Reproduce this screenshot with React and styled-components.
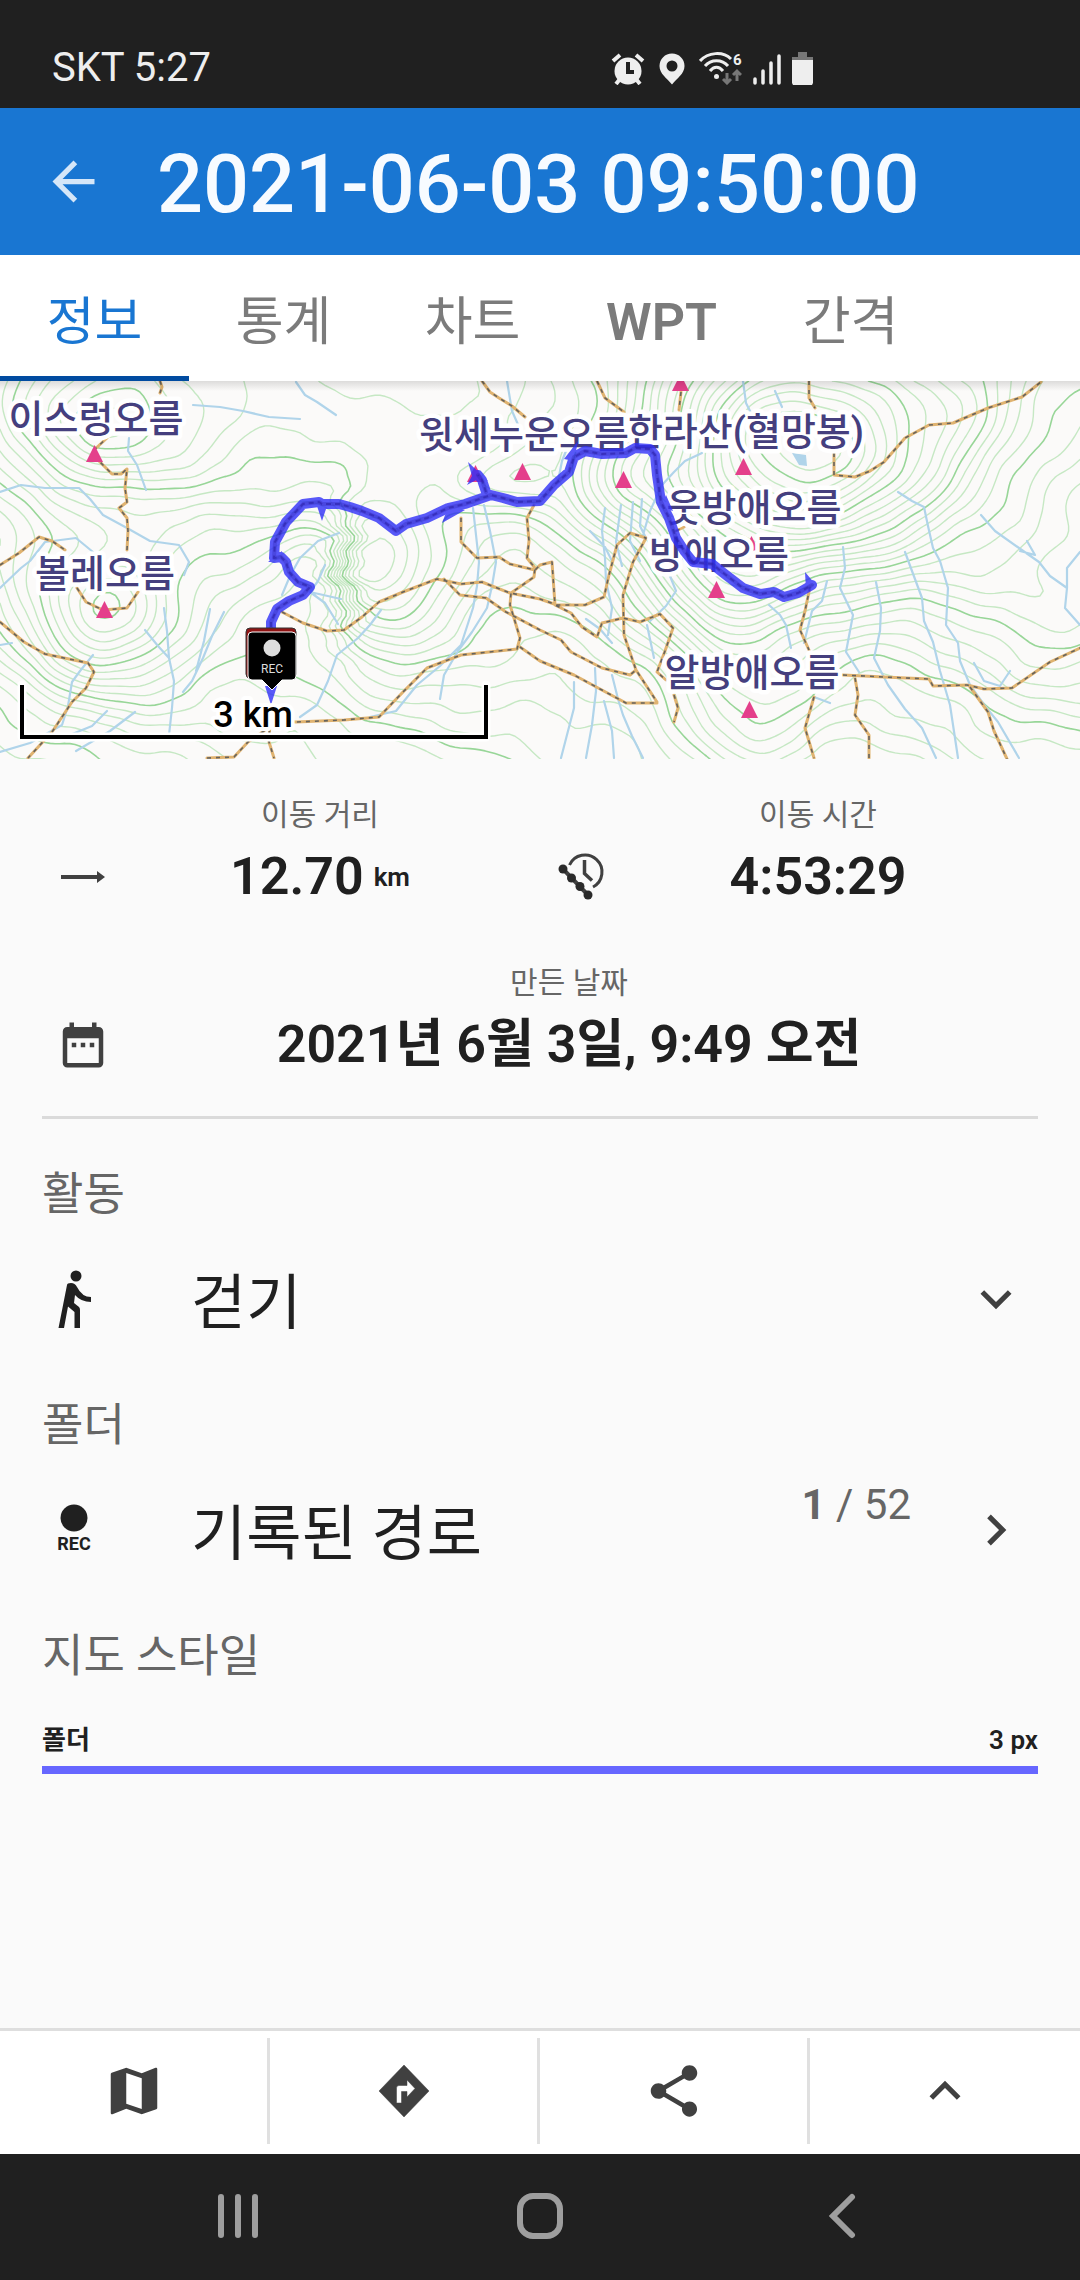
import React from 'react'
import styled, { createGlobalStyle } from 'styled-components';
import {
  MdArrowBack,
  MdDateRange,
  MdKeyboardArrowDown,
  MdKeyboardArrowRight,
  MdKeyboardArrowUp,
  MdMap,
  MdShare,
} from 'react-icons/md';


const GlobalStyle = createGlobalStyle`
  * {
    box-sizing: border-box;
  }
  body {
    margin: 0;
    background: #fafafa;
    color: #202020;
    font-family: Roboto, "Noto Sans CJK KR", sans-serif;
  }
  button, select {
    margin: 0;
    padding: 0;
    border: 0;
    background: none;
    color: inherit;
    font: inherit;
  }
  svg {
    display: block;
    flex-shrink: 0;
  }
`;

const Page = styled.div`
  display: flex;
  flex-direction: column;
  min-height: 100vh;
`;

/* ---------- top ---------- */

const StatusBar = styled.div`
  display: flex;
  align-items: center;
  justify-content: space-between;
  height: 108px;
  padding: 28px 267px 0 52px;
  background: #202020;
  color: #eee;
  font-size: 40px;
  line-height: 44px;
`;

const StatusIcons = styled.div`
  display: flex;
  align-items: flex-end;
  gap: 11px;
`;

const Header = styled.header`
  display: flex;
  align-items: center;
  gap: 52px;
  height: 147px;
  padding: 0 42px;
  background: #1976d2;
  color: #f7fbff;
`;

const BackButton = styled.button`
  color: #d5e6f8;
`;

const Title = styled.h1`
  margin: 0;
  padding-top: 7px;
  font-size: 81px;
  font-weight: 500;
  line-height: 96px;
  white-space: nowrap;
`;

const Tabs = styled.nav`
  display: flex;
  height: 126px;
  background: #fff;
`;

const Tab = styled.button`
  min-width: 189px;
  padding-top: 15px;
  border-bottom: 5px solid ${({ $active }) => ($active ? '#004ba0' : 'transparent')};
  color: ${({ $active }) => ($active ? '#1976d2' : '#7b7b7b')};
  font-size: 52px;
  font-weight: ${({ $latin }) => ($latin ? 600 : 400)};
  line-height: 72px;
`;

/* ---------- map ---------- */

const MapBox = styled.div`
  position: relative;
  height: 378px;
  background: #fbfaf9;

  > svg {
    width: 100%;
    height: 100%;
  }

  &::before {
    content: "";
    position: absolute;
    top: 0;
    left: 0;
    right: 0;
    height: 10px;
    background: linear-gradient(rgba(0, 0, 0, 0.12), transparent);
  }
`;

const Line = styled.path`
  fill: none;
  stroke-linejoin: round;
  stroke-linecap: ${({ $dash }) => ($dash ? 'butt' : 'round')};
  stroke: ${({ $color }) => $color};
  stroke-width: ${({ $width }) => $width};
  stroke-dasharray: ${({ $dash }) => $dash || 'none'};
`;

const PeakName = styled.text`
  fill: #453f7e;
  stroke: #fff;
  stroke-width: 9px;
  stroke-linejoin: round;
  paint-order: stroke;
  font-size: 38px;
  font-weight: 500;
  text-anchor: middle;
`;

const ScaleText = styled.text`
  fill: #000;
  stroke: #fff;
  stroke-width: 8px;
  stroke-linejoin: round;
  paint-order: stroke;
  font-size: 36px;
  font-weight: 500;
  text-anchor: middle;
`;

const MarkerText = styled.text`
  fill: #ddd;
  font-size: 12px;
  text-anchor: middle;
`;

const MAP_W = 1080;
const MAP_H = 378;

// x, y, height, spread x, spread y
const hills = [
  [104, 235, 10, 60, 55],
  [90, 50, 9, 75, 55],
  [475, 102, 2, 22, 20],
  [522, 97, 3, 25, 22],
  [623, 104, 4, 45, 30],
  [790, 80, 24, 110, 95],
  [716, 215, 5, 45, 40],
  [749, 335, 6, 50, 60],
  [398, 190, 5, 60, 90],
  [250, 40, 4, 120, 100],
  [960, 20, 5, 60, 60],
  [1040, 250, 5, 90, 110],
];

const heightAt = (x, y) => {
  let h = 20 + x * 0.012 - y * 0.03;
  hills.forEach(([cx, cy, top, sx, sy]) => {
    h += top * Math.exp(-(((x - cx) / sx) ** 2 + ((y - cy) / sy) ** 2) / 2);
  });
  // the cliff east of the first bend
  const edge = 345 + Math.sin(y / 4) * 4 + Math.sin(y / 11) * 6;
  h += 7 * Math.tanh((x - edge) / 22) * Math.exp(-(((x - 345) / 70) ** 2 + ((y - 190) / 60) ** 2));
  h += Math.sin(x / 17 + y / 29) * 0.22 + Math.sin(y / 13 - x / 37) * 0.2;
  h += Math.sin(x / 53 - y / 41) * 0.5 + Math.sin(x / 7 + Math.sin(y / 9)) * 0.06;
  return h;
};

// marching squares over the height field, one path string per level
const contour = (level, step = 5) => {
  const mix = (a, b) => (level - a) / (b - a);
  let d = '';
  for (let y = 0; y < MAP_H; y += step) {
    for (let x = 0; x < MAP_W; x += step) {
      const a = heightAt(x, y);
      const b = heightAt(x + step, y);
      const c = heightAt(x + step, y + step);
      const e = heightAt(x, y + step);
      const cuts = [];
      if (a > level !== b > level) cuts.push([x + step * mix(a, b), y]);
      if (b > level !== c > level) cuts.push([x + step, y + step * mix(b, c)]);
      if (e > level !== c > level) cuts.push([x + step * mix(e, c), y + step]);
      if (a > level !== e > level) cuts.push([x, y + step * mix(a, e)]);
      for (let i = 0; i + 1 < cuts.length; i += 2) {
        const [p, q] = [cuts[i], cuts[i + 1]];
        d += `M${p[0].toFixed(1)} ${p[1].toFixed(1)}L${q[0].toFixed(1)} ${q[1].toFixed(1)}`;
      }
    }
  }
  return d;
};

const levels = Array.from({ length: 52 }, (unused, i) => 4 + i);
const minorContours = levels.filter((l) => l % 5 !== 0).map((l) => contour(l)).join('');
const majorContours = levels.filter((l) => l % 5 === 0).map((l) => contour(l)).join('');

const streams = `
  M0 111L21 104L45 107L79 107L90 118L103 134L127 147L150 160L179 164L189 181L184 194
  M0 207L21 187L30 180L45 161L76 157L93 171
  M193 24L220 26L243 30L269 36L300 38 M296 1L305 14L317 21L336 34
  M129 57L128 70L137 84L146 109
  M164 227L167 250L169 277L174 300L172 327L169 354 M145 249L158 265L169 277
  M224 231L212 255L203 277L192 300L183 311 M210 228L204 260L196 290
  M93 274L80 290L72 301L68 325L62 344L30 362L0 371 M0 264L12 262
  M107 330L92 345L60 358 M135 331L110 350L76 370
  M484 124L490 150L496 181L492 205L487 227L472 251L458 270L444 294L440 318
  M473 127L479 181L477 205L473 227L461 264L440 285L417 304L396 330L370 336
  M381 229L370 244L358 257L337 274L328 300L317 324L300 336
  M339 152L318 160L300 177L290 195L282 214 M325 184L318 200L310 211L341 218
  M310 211L325 222L338 243
  M898 111L912 120L924 126L928 145L933 167L940 180L948 207L946 244L958 262L960 280L970 304L985 325L998 341L1019 377
  M905 171L912 190L922 217L924 240L933 261L940 290L950 324L958 377
  M981 134L995 150L1019 167L1039 181L1050 195L1067 207L1065 227L1080 244
  M1080 171L1067 187L1067 207 M1027 160L1035 174L1020 170
  M843 166L845 187L840 207L853 234L846 271L859 291
  M876 201L881 227L880 250L874 277L888 304L905 328L922 347L936 377
  M974 282L984 300L1000 305L1010 290
  M605 127L602 150L605 177L606 200L612 227L608 254 M621 124L616 161L622 185
  M633 121L630 160L640 180 M642 118L640 145L646 157
  M702 72L685 80L674 91L662 104L650 130L643 154
  M574 301L574 327L568 350L561 377 M595 287L596 310L592 344L586 377
  M612 294L618 318L623 334L632 355L643 377 M604 320L612 350L614 377
  M769 224L780 234L786 244L791 267 M647 244L654 277 M590 150L605 166L612 180
  M827 200L822 220L812 230L804 262 M743 0L746 22L752 34 M775 10L782 26
  M668 190L676 210L666 225L650 240 M507 0L512 30L520 48 M814 316L830 322
  M570 60L562 80L558 100 M586 238L600 248L612 262
`;

const trails = `
  M0 184L19 172L39 156L52 160L65 169
  M77 207L86 221L103 229L127 227L138 211
  M127 169L128 150L127 137L119 127L127 121L125 107L127 88L121 93L112 93L98 79L94 69L107 57
  M0 241L24 261L45 273L69 278L88 282L94 291L86 307L72 321L52 351L28 377
  M282 231L303 242L327 250L344 249L362 236L379 221L403 211L437 198L461 203L482 201L510 212L540 218L557 224L585 224L604 216L609 194L617 164L630 152L646 157L633 181L623 214L624 254L636 289L657 321
  M444 198L460 214L486 217L506 231L540 249L561 259L571 271L602 287L630 294L636 289
  M270 339L296 341L344 339L379 336L403 311L427 287L461 274L517 268L520 257L510 224L511 212L534 196L535 187L527 177L529 160L527 137L534 124
  M461 137L461 161L477 177L499 176L510 183L535 189L540 184L552 181L555 224L571 232L582 246L597 256L602 242L623 237L640 241L660 233L673 247L665 270L657 291L666 299
  M674 314L678 327L674 341
  M520 266L540 280L574 294L600 308L626 322L657 322
  M482 0L490 11L499 17L512 25L525 36 M160 0L162 6L160 12
  M597 0L605 17L624 31 M681 11L679 29 M809 0L809 17L815 27
  M834 72L834 94L855 96L870 90L884 81L905 57L929 44L953 42L988 27L1022 16L1041 1
  M810 206L805 230L800 249L809 269
  M843 294L884 296L929 298L933 305L967 304L984 308L1012 307L1050 281L1080 267
  M970 306L988 331L994 350L1007 378 M855 297L858 314L855 334L869 354L869 377
  M814 316L805 347L814 377 M207 377L234 376L248 361L264 350L270 339L269 361L274 377
  M676 150L684 146
`;

const route = `
  M271 300L271 241L277 228L289 220L303 214L310 206L298 201L289 191L286 181L281 176L274 177L275 161L286 141
  L303 123L319 121L322 123L339 123L350 126L362 130L379 137L396 150L406 143L427 137L448 127L465 123L491 114L503 117L517 121L540 120
  L554 104L569 91L574 76L585 70L602 73L626 72L635 67L650 68L655 74L657 94L661 121L669 137L676 157L685 171L693 181
  L712 183L726 194L743 207L760 213L774 211L784 216L798 212L812 204
  M486 111L482 99L478 94
`;

const arrowHeads = 'M468 81L488 100L478 98L467 104L472 95Z M316 122L328 122L322 140Z M442 142L449 124L465 129Z M805 191L816 204L806 209Z M578 60L574 80L564 78Z M666 114L673 130L660 126Z M268 181L282 170L282 181Z M265 305L277 305L271 324Z';

const summits = [
  [94, 81], [475, 101], [522, 99], [104, 237], [680, 10],
  [623, 107], [743, 94], [716, 217], [749, 337], [751, 172],
];

const peaks = [
  { name: '이스렁오름', x: 96, y: 51 },
  { name: '윗세누운오름', x: 524, y: 67 },
  { name: '한라산(혈망봉)', x: 746, y: 64 },
  { name: '웃방애오름', x: 754, y: 140 },
  { name: '방애오름', x: 719, y: 187 },
  { name: '알방애오름', x: 752, y: 305 },
  { name: '볼레오름', x: 105, y: 206 },
];

const TrackMap = () => (
  <MapBox>
    <svg viewBox={`0 0 ${MAP_W} ${MAP_H}`} preserveAspectRatio="xMidYMid slice">
      <Line d={minorContours} $color="#c6e8c4" $width={1.4} />
      <Line d={majorContours} $color="#98d698" $width={1.6} />
      <Line d={streams} $color="#b0d4ea" $width={2.2} />
      <path d="M792 72L806 74L807 85L799 84Z" fill="#b0d4ea" />
      <Line d={trails} $color="#e0b370" $width={3} />
      <Line d={trails} $color="#66635e" $width={1.6} $dash="4 5" />
      {summits.map(([x, y]) => (
        <path key={`${x}-${y}`} d={`M${x - 8} ${y}h17l-8.500-17z`} fill="#e43f8b" />
      ))}
      {peaks.map(({ name, x, y }) => (
        <PeakName key={name} x={x} y={y}>{name}</PeakName>
      ))}
      <g opacity="0.8">
        <Line d={route} $color="#3030f8" $width={10} />
        <path d={arrowHeads} fill="#3030f8" />
      </g>
      <Line d={route} $color="#2b22a8" $width={4} opacity="0.3" />
      <Line d={route} $color="#2b22a8" $width={2} $dash="5 4" opacity="0.6" />

      <rect x="246" y="247" width="50" height="50" rx="4" fill="#8f1414" stroke="#333" />
      <path
        d="M252 251h40a4 4 0 0 1 4 4v40a4 4 0 0 1-4 4h-10l-10 10-10-10h-10a4 4 0 0 1-4-4v-40a4 4 0 0 1 4-4z"
        fill="#000"
        stroke="#fff"
      />
      <circle cx="272" cy="267" r="8.500" fill="#ddd" />
      <MarkerText x="272" y="292">REC</MarkerText>

      <Line d="M22 304V356H486V304" $color="#fff" $width={9} />
      <path d="M22 304V356H486V304" fill="none" stroke="#000" strokeWidth="4" />
      <ScaleText x="253" y="346">3 km</ScaleText>
    </svg>
  </MapBox>
)

/* ---------- summary ---------- */

const Stats = styled.section`
  display: grid;
  grid-template-columns: 1fr 1fr;
  margin: 0 42px;
  padding-bottom: 21px;
  border-bottom: 3px solid #dadada;
`;

const Stat = styled.div`
  display: grid;
  grid-column: ${({ $wide }) => ($wide ? '1 / -1' : 'auto')};
  grid-template-columns: 82px 1fr;
  grid-template-rows: 44px 80px;
  grid-template-areas:
   ". label"
   "icon value";
  align-items: center;
  padding: 34px 24px 10px 0;
  text-align: center;

  > svg {
    grid-area: icon;
    justify-self: center;
    color: #404040;
  }
`;

const StatLabel = styled.div`
  grid-area: label;
  color: #666;
  font-size: 30px;
  line-height: 44px;
`;

const StatValue = styled.div`
  grid-area: value;
  font-size: 52px;
  font-weight: 600;
  line-height: 80px;
`;

const Unit = styled.span`
  margin-left: 10px;
  font-size: 26px;
  vertical-align: 8px;
`;

/* ---------- details ---------- */

const Details = styled.main`
  flex: 1;
  padding: 45px 42px 100px;
`;

const Caption = styled.label`
  display: block;
  margin: 0;
  color: #666;
  font-size: 45px;
  font-weight: 400;
  line-height: 62px;
`;

const Row = styled.div`
  display: flex;
  align-items: center;
  width: 100%;
  height: 146px;
  margin-bottom: 23px;
  padding-right: 11px;
  font-size: 60px;
  line-height: 80px;
  text-align: left;

  > svg:last-child {
    color: #404040;
  }
`;

const RowIcon = styled.span`
  display: flex;
  flex-direction: column;
  align-items: center;
  width: 64px;
  margin-right: 85px;
  font-size: 18px;
  font-weight: 700;
  line-height: 24px;
`;

const RowText = styled.span`
  flex: 1;
  padding-top: 10px;
`;

const ActivitySelect = styled.select`
  flex: 1;
  height: 100px;
  && {
    padding-top: 10px;
  }
  appearance: none;
`;

const Count = styled.span`
  align-self: flex-start;
  margin: 18px 54px 0 0;
  color: #666;
  font-size: 42px;
  line-height: 60px;
`;

const StyleLine = styled.div`
  display: flex;
  justify-content: space-between;
  margin-top: 32px;
  padding-bottom: 6px;
  border-bottom: 8px solid #6666ff;
  font-size: 26px;
  font-weight: 600;
  line-height: 40px;
`;

/* ---------- bottom ---------- */

const Toolbar = styled.div`
  display: grid;
  grid-template-columns: repeat(4, 1fr);
  height: 126px;
  padding: 7px 0 10px;
  border-top: 3px solid #dedede;
  background: #fff;
`;

const ToolButton = styled.button`
  display: flex;
  align-items: center;
  justify-content: center;
  color: #404040;

  &:not(:last-child) {
    border-right: 3px solid #e0e0e0;
  }
`;

const NavBar = styled.div`
  display: flex;
  justify-content: center;
  height: 126px;
  padding-bottom: 3px;
  background: #202020;
`;

const NavButton = styled.button`
  display: flex;
  align-items: center;
  justify-content: center;
  width: 28%;
`;

const AlarmIcon = () => (
  <svg width="34" height="32" viewBox="0 0 34 32">
    <g stroke="#eee" strokeWidth="4">
      <path d="M2 8L9 2M32 8L25 2M5 31L9 26M29 31L25 26" />
    </g>
    <circle cx="17" cy="18" r="13.500" fill="#eee" />
    <path d="M17 9V19H23" fill="none" stroke="#202020" strokeWidth="4" />
  </svg>
)

const PinIcon = () => (
  <svg width="32" height="32" viewBox="0 0 32 32">
    <path
      d="M16 0.500C9 0.500 3.500 6 3.500 13C3.500 21 11 25 16 31.500C21 25 28.500 21 28.500 13C28.500 6 23 0.500 16 0.500ZM16 7.500a5.500 5.500 0 1 1 0 11a5.500 5.500 0 1 1 0-11Z"
      fill="#eee"
      fillRule="evenodd"
    />
  </svg>
)

const WifiText = styled.text`
  fill: #eee;
  font-size: 15px;
  font-weight: 700;
`;

const WifiIcon = () => (
  <svg width="43" height="33" viewBox="0 0 43 33">
    <g fill="none" stroke="#eee" strokeWidth="3">
      <path d="M1 9C9 0 24 -1 32 7" />
      <path d="M6 14C12 7 23 7 29 14" />
      <path d="M11 19C15 14 20 14 24 19" />
    </g>
    <circle cx="17.500" cy="24.500" r="2.500" fill="#eee" />
    <g stroke="#777" strokeWidth="3" fill="none">
      <path d="M28 21V31M24 27L28 31L32 27M38 29V19M34 23L38 19L42 23" />
    </g>
    <WifiText x="34" y="13">6</WifiText>
  </svg>
)

const SignalIcon = () => (
  <svg width="28" height="32" viewBox="0 0 28 32">
    <path d="M2 26V30M10 18V30M18 10V30M26 3V30" stroke="#eee" strokeWidth="3.500" strokeLinecap="round" />
  </svg>
)

const BatteryIcon = () => (
  <svg width="21" height="33" viewBox="0 0 21 33">
    <path d="M6 0H15V5H21V8H0V5H6Z" fill="#777" />
    <path d="M0 8H21V31L20 33H1L0 31Z" fill="#eee" />
  </svg>
)

const DistanceIcon = () => (
  <svg width="44" height="16" viewBox="0 0 44 16">
    <path d="M0 6H36V2L44 8L36 14V10H0Z" fill="currentColor" />
  </svg>
)

const MovingTimeIcon = () => (
  <svg width="50" height="50" viewBox="0 0 50 50">
    <g fill="none" stroke="currentColor" strokeWidth="3">
      <path d="M13.500 13A17 17 0 1 1 37 35" />
      <path d="M28.500 8V21.500L36 28.500" strokeWidth="3.500" />
      <path d="M7 17L32 43" strokeWidth="4" />
    </g>
    <g fill="#2a2a2a">
      <circle cx="7" cy="17" r="4.500" />
      <circle cx="15.500" cy="26" r="4.500" />
      <circle cx="24" cy="34.500" r="4.500" />
      <circle cx="32" cy="43" r="4.500" />
    </g>
  </svg>
)

const WalkIcon = () => (
  <svg width="36" height="58" viewBox="0 0 36 58">
    <circle cx="20" cy="6" r="5.500" fill="currentColor" />
    <path
      d="M11 15Q11 13 15 13Q19 13 21 17Q26 27 35 27V32Q25 32 19 25L18 33L23 37Q24 38 24 40V58H18.500V42L12 36.500L8 58H2.500Z"
      fill="currentColor"
    />
  </svg>
)

const RecDot = () => (
  <svg width="28" height="28" viewBox="0 0 28 28">
    <circle cx="14" cy="14" r="13.500" fill="currentColor" />
  </svg>
)

const DirectionsIcon = () => (
  <svg width="52" height="54" viewBox="0 0 52 54">
    <path
      d="M26 1L51 27L26 53L1 27ZM18.500 39H23.500V27.500H29V33L37 24.500L29 16V21.500H21Q18.500 21.500 18.500 24Z"
      fill="currentColor"
      fillRule="evenodd"
      stroke="currentColor"
      strokeWidth="0.500"
      strokeLinejoin="round"
    />
  </svg>
)

const tabs = [
  { name: '정보', active: true },
  { name: '통계' },
  { name: '차트' },
  { name: 'WPT', latin: true },
  { name: '간격' },
];

export default () => (
  <Page>
    <GlobalStyle />
    <StatusBar>
      <span>SKT 5:27</span>
      <StatusIcons>
        <AlarmIcon />
        <PinIcon />
        <WifiIcon />
        <SignalIcon />
        <BatteryIcon />
      </StatusIcons>
    </StatusBar>
    <Header>
      <BackButton aria-label="뒤로">
        <MdArrowBack size={63} />
      </BackButton>
      <Title>2021-06-03 09:50:00</Title>
    </Header>
    <Tabs role="tablist">
      {tabs.map(({ name, active, latin }) => (
        <Tab key={name} role="tab" aria-selected={!!active} $active={active} $latin={latin}>{name}</Tab>
      ))}
    </Tabs>

    <TrackMap />

    <Stats>
      <Stat>
        <DistanceIcon />
        <StatLabel>이동 거리</StatLabel>
        <StatValue>12.70<Unit>km</Unit></StatValue>
      </Stat>
      <Stat>
        <MovingTimeIcon />
        <StatLabel>이동 시간</StatLabel>
        <StatValue>4:53:29</StatValue>
      </Stat>
      <Stat $wide>
        <MdDateRange size={54} />
        <StatLabel>만든 날짜</StatLabel>
        <StatValue>2021년 6월 3일, 9:49 오전</StatValue>
      </Stat>
    </Stats>

    <Details>
      <Caption htmlFor="activity">활동</Caption>
      <Row>
        <RowIcon><WalkIcon /></RowIcon>
        <ActivitySelect id="activity" defaultValue="walk">
          <option value="walk">걷기</option>
        </ActivitySelect>
        <MdKeyboardArrowDown size={62} />
      </Row>
      <Caption htmlFor="folder">폴더</Caption>
      <Row as="button" id="folder">
        <RowIcon>
          <RecDot />
          REC
        </RowIcon>
        <RowText>기록된 경로</RowText>
        <Count><b>1</b> / 52</Count>
        <MdKeyboardArrowRight size={62} />
      </Row>
      <Caption as="h2">지도 스타일</Caption>
      <StyleLine>
        <span>폴더</span>
        <span>3 px</span>
      </StyleLine>
    </Details>

    <Toolbar>
      <ToolButton aria-label="지도"><MdMap size={62} /></ToolButton>
      <ToolButton aria-label="길안내"><DirectionsIcon /></ToolButton>
      <ToolButton aria-label="공유"><MdShare size={62} /></ToolButton>
      <ToolButton aria-label="더보기"><MdKeyboardArrowUp size={62} /></ToolButton>
    </Toolbar>
    <NavBar>
      <NavButton aria-label="최근 앱">
        <svg width="42" height="46" viewBox="0 0 42 46">
          <path d="M4 4V42M21 4V42M38 4V42" stroke="#9e9e9e" strokeWidth="6" strokeLinecap="round" />
        </svg>
      </NavButton>
      <NavButton aria-label="홈">
        <svg width="46" height="46" viewBox="0 0 46 46">
          <rect x="3" y="3" width="40" height="40" rx="13" fill="none" stroke="#9e9e9e" strokeWidth="6" />
        </svg>
      </NavButton>
      <NavButton aria-label="이전">
        <svg width="28" height="46" viewBox="0 0 28 46">
          <path d="M24 4L5 23L24 42" fill="none" stroke="#9e9e9e" strokeWidth="6" strokeLinecap="round" />
        </svg>
      </NavButton>
    </NavBar>
  </Page>
)
